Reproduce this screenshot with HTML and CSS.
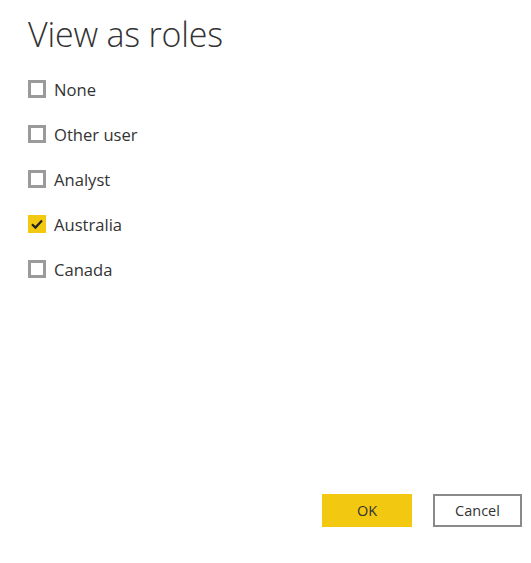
FILE: index.html
```html
<!DOCTYPE html>
<html>
<head>
<meta charset="utf-8">
<link rel="stylesheet" href="styles.css">
</head>
<body>
<div class="dialog">
  <h1 class="title">View as roles</h1>
  <ul class="roles">
    <li class="role"><span class="box"></span><span class="label">None</span></li>
    <li class="role"><span class="box"></span><span class="label">Other user</span></li>
    <li class="role"><span class="box"></span><span class="label">Analyst</span></li>
    <li class="role"><span class="box checked"><svg viewBox="0 0 18 18" width="18" height="18"><path d="M4 9.2 L7.4 12.6 L14 5.6" fill="none" stroke="#222" stroke-width="2.2"/></svg></span><span class="label">Australia</span></li>
    <li class="role"><span class="box"></span><span class="label">Canada</span></li>
  </ul>
  <div class="actions">
    <button class="btn primary">OK</button>
    <button class="btn secondary">Cancel</button>
  </div>
</div>
</body>
</html>
```
FILE: styles.css
```css
html, body {
  margin: 0;
  padding: 0;
  background: #fff;
}
body {
  font-family: "Open Sans", "Noto Sans", sans-serif;
  color: #333;
}
.dialog {
  width: 531px;
  height: 563px;
  box-sizing: border-box;
  padding: 13px 9px 0 28px;
  display: flex;
  flex-direction: column;
}
.title {
  margin: 0;
  font-weight: 300;
  font-size: 34px;
  line-height: 42px;
  color: #333;
  letter-spacing: -0.2px;
}
.roles {
  list-style: none;
  margin: 23px 0 0 0;
  padding: 0;
  display: flex;
  flex-direction: column;
  gap: 23px;
}
.role {
  display: flex;
  align-items: center;
  height: 22px;
  gap: 8px;
}
.box {
  width: 18px;
  height: 18px;
  box-sizing: border-box;
  border: 3px solid #9a9a9a;
  background: #fff;
  display: block;
}
.box.checked {
  border: none;
  background: #f2c811;
}
.box svg { display: block; }
.label {
  font-size: 16.6px;
  color: #333;
}
.actions {
  margin-top: auto;
  margin-bottom: 36px;
  display: flex;
  justify-content: flex-end;
  gap: 21px;
}
.btn {
  height: 33px;
  font-family: "Open Sans", "Noto Sans", sans-serif;
  font-size: 14.5px;
  color: #333;
  padding: 0;
  cursor: pointer;
}
.primary {
  width: 90px;
  background: #f2c811;
  border: none;
}
.secondary {
  width: 89px;
  background: #fff;
  border: 2px solid #8a8a8a;
}
```
